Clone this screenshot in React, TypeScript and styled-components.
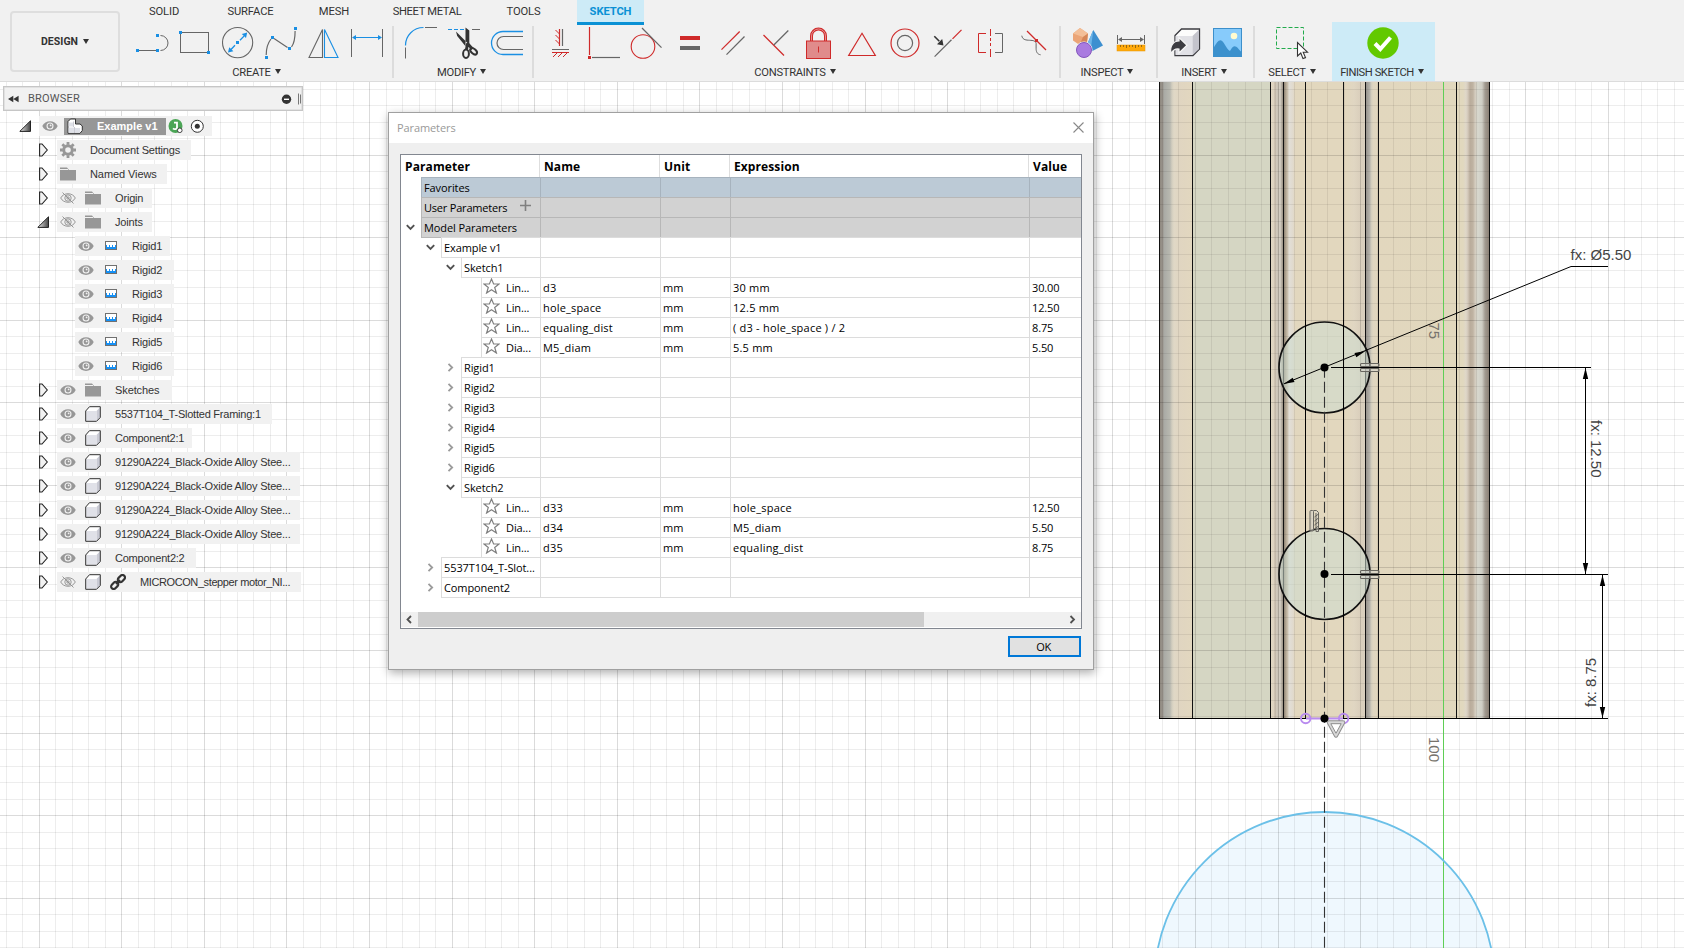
import React from "react";
import styled, { createGlobalStyle } from "styled-components";

const GlobalStyle = createGlobalStyle`
  html, body { margin: 0; padding: 0; background: #fff; overflow: hidden; }
  *, *::before, *::after { box-sizing: border-box; }
`;

const BLUE = "#1a8fe3";
const RED = "#cf2a2a";
const GRAY = "#666";

/* ---------- Shell ---------- */

const Page = styled.div`
  position: relative;
  width: 1684px;
  height: 948px;
  overflow: hidden;
  display: flex;
  flex-direction: column;
  background: #fff;
  font-family: "Liberation Sans", Arial, sans-serif;
  font-size: 11px;
  color: #333;
`;

const Canvas = styled.svg`
  position: absolute;
  left: 0;
  top: 0;
`;

/* ---------- Toolbar ---------- */

const Toolbar = styled.header`
  position: relative;
  height: 82px;
  flex: none;
  display: flex;
  background: #f1f1f1;
  border-bottom: 1px solid #dcdcdc;
  font-family: Roboto, "Liberation Sans", sans-serif;
  font-size: 11.2px;
  color: #333;
`;

const DesignButton = styled.button`
  width: 110px;
  height: 61px;
  margin: 11px 4px 0 10px;
  padding: 0;
  display: flex;
  align-items: center;
  justify-content: center;
  gap: 5px;
  border: 2px solid #dedede;
  border-radius: 4px;
  background: #f1f1f1;
  font: 700 10.5px Roboto, sans-serif;
  letter-spacing: 0.05px;
  color: #333;
`;

const Caret = styled.i`
  width: 0;
  height: 0;
  border: 3px solid transparent;
  border-top: 5px solid #333;
  border-bottom: 0;
`;

const ToolbarMain = styled.div`
  display: flex;
  flex-direction: column;
`;

const Tabs = styled.nav`
  display: flex;
  height: 22px;
`;

const Tab = styled.div<{ $w: number; $active?: boolean; $ls?: number }>`
  width: ${(p) => p.$w}px;
  height: ${(p) => (p.$active ? 25 : 22)}px;
  margin-left: ${(p) => (p.$active ? 13 : 0)}px;
  line-height: 23px;
  text-align: center;
  letter-spacing: ${(p) => p.$ls ?? -0.1}px;
  white-space: nowrap;
  flex: none;
  ${(p) =>
    p.$active &&
    `background:#cdebf7; color:#0a91d5; font-weight:700; border-bottom:3px solid #0a91d5; z-index:1;`}
`;

const Groups = styled.div`
  display: flex;
  height: 59px;
`;

const Group = styled.section<{ $w: number; $hot?: boolean }>`
  width: ${(p) => p.$w}px;
  flex: none;
  display: flex;
  flex-direction: column;
  background: ${(p) => (p.$hot ? "#cdebf7" : "transparent")};
`;

const Divider = styled.span`
  width: 2px;
  height: 52px;
  margin-top: 4px;
  flex: none;
  background: #dcdcdc;
`;

const IconRow = styled.div`
  display: flex;
  height: 40px;
`;

const GroupLabel = styled.div<{ $ls?: number }>`
  height: 19px;
  padding: 1px 3px 0 0;
  display: flex;
  align-items: center;
  justify-content: center;
  gap: 4px;
  letter-spacing: ${(p) => p.$ls ?? -0.3}px;
  white-space: nowrap;
  i { margin-top: -2px; }
`;

const ToolSvg = styled.svg`
  display: block;
  flex: none;
  overflow: visible;
  fill: none;
`;

/* A tool slot spans from x to x2 on the toolbar; its art uses toolbar coordinates. */
function Tool({ x, x2, children }: { x: number; x2: number; children: React.ReactNode }) {
  return (
    <ToolSvg width={x2 - x} height={40} viewBox={`${x} 22 ${x2 - x} 40`}>
      {children}
    </ToolSvg>
  );
}

function Sq({ x, y, c = BLUE }: { x: number; y: number; c?: string }) {
  return <rect x={Math.round(x - 1.5)} y={Math.round(y - 1.5)} width="3" height="3" fill={c} />;
}

function CreateTools() {
  return (
    <IconRow>
      <Tool x={124} x2={174}>
        <path d="M139 50.5H156M160.5 35.5a7.5 7.5 0 0 1 0 15" stroke={GRAY} />
        <Sq x={137.7} y={50.3} /><Sq x={157.4} y={50.3} /><Sq x={157.4} y={35.3} />
      </Tool>
      <Tool x={174} x2={216}>
        <rect x="180.5" y="32.5" width="28" height="20" stroke={GRAY} />
        <Sq x={180.4} y={32.3} /><Sq x={208.6} y={52.3} />
      </Tool>
      <Tool x={216} x2={260}>
        <circle cx="237.6" cy="42.6" r="15.1" stroke={GRAY} strokeWidth="1.1" />
        <path d="M231 49.5l4-4.2M240 40.3l4-4.2" stroke={BLUE} strokeWidth="1.3" />
        <path d="M228 52.6l1.2-5.4 4.2 4zM247.2 32.6l-1.2 5.4-4.2-4z" fill={BLUE} />
        <Sq x={237.6} y={42.6} />
      </Tool>
      <Tool x={260} x2={302}>
        <path d="M266.2 55c0-7 2-12.500 4.800-16M274 38.500L287.500 47.500M291.500 47c3-4 3.600-9 3.600-16" stroke={GRAY} strokeWidth="1.2" />
        <Sq x={266.2} y={57.3} /><Sq x={272.4} y={37.3} /><Sq x={289.3} y={48.3} /><Sq x={295.1} y={28.7} />
      </Tool>
      <Tool x={302} x2={345}>
        <path d="M309 57.500L322.500 29.500V57.500Z" stroke={GRAY} strokeWidth="1.1" />
        <path d="M324.500 29.500L338 57.500H324.500Z" stroke={BLUE} strokeWidth="1.1" />
      </Tool>
      <Tool x={345} x2={393}>
        <path d="M351.500 29V57M382.500 29V57" stroke={GRAY} />
        <path d="M354 37.500H380" stroke={BLUE} />
        <path d="M352 37.500l4-2.500v5zM382 37.500l-4-2.500v5z" fill={BLUE} />
      </Tool>
    </IconRow>
  );
}

function ModifyTools() {
  return (
    <IconRow>
      <Tool x={394} x2={443}>
        <path d="M405.500 45.500A18 18 0 0 1 423.500 27.500" stroke={BLUE} strokeWidth="1.2" />
        <path d="M405.500 47.500V58.500M425 27.500H437" stroke={GRAY} />
      </Tool>
      <Tool x={443} x2={485}>
        <path d="M448 29.500H464" stroke={BLUE} strokeDasharray="4 2" />
        <path d="M472 29.500H480" stroke={GRAY} />
        <path d="M465.500 27.500l3.800 3v14l-3.800 2zM456 31.500l1.200 4.500 8.500 10.500 3.800-1.500z" fill="#333" />
        <path d="M467 43l5.500 6M467.500 43.500l-1 6" stroke="#333" strokeWidth="3" />
        <ellipse cx="466" cy="53.700" rx="2.900" ry="4.200" stroke="#333" strokeWidth="2" />
        <ellipse cx="473.600" cy="51.300" rx="2.300" ry="4" transform="rotate(-48 473.600 51.300)" stroke="#333" strokeWidth="2" />
      </Tool>
      <Tool x={485} x2={532}>
        <path d="M523 31.500H503a11.500 11.500 0 0 0 0 23H523" stroke={BLUE} strokeWidth="1.300" />
        <path d="M523 36.500H503.500a6.500 6.500 0 0 0 0 13H523" stroke={GRAY} strokeWidth="1.200" />
      </Tool>
    </IconRow>
  );
}

function ConstraintTools() {
  return (
    <IconRow>
      <Tool x={534} x2={580}>
        <path d="M559.500 29V46M552 52.500H569" stroke={RED} strokeWidth="1.200" />
        <path d="M562.500 29V46M552 49.500H569" stroke={GRAY} strokeWidth="1.200" />
        <path d="M555.500 30l4 4M555.500 35l4 4M555.500 40l4 4M557 53l-4 4M562 53l-4 4M567 53l-4 4" stroke={RED} />
      </Tool>
      <Tool x={580} x2={625}>
        <path d="M589.500 27V55" stroke={RED} strokeWidth="1.200" />
        <path d="M592 57.500H620" stroke={GRAY} strokeWidth="1.200" />
        <Sq x={589.5} y={57.5} c={RED} />
      </Tool>
      <Tool x={625} x2={670}>
        <circle cx="643" cy="46.500" r="11.800" stroke={RED} strokeWidth="1.100" />
        <path d="M642 28L661.500 47.700" stroke={GRAY} strokeWidth="1.200" />
      </Tool>
      <Tool x={670} x2={711}>
        <rect x="680" y="36" width="20" height="4" fill={RED} />
        <rect x="680" y="46" width="20" height="4" fill={GRAY} />
      </Tool>
      <Tool x={711} x2={755}>
        <path d="M721.500 49.700L739.700 31.500" stroke={RED} strokeWidth="1.200" />
        <path d="M726.500 54.700L744.500 36.500" stroke={GRAY} strokeWidth="1.200" />
      </Tool>
      <Tool x={755} x2={797}>
        <path d="M763.500 35L784 55.500" stroke={RED} strokeWidth="1.200" />
        <path d="M773.800 45L788.300 30.500" stroke={GRAY} strokeWidth="1.200" />
      </Tool>
      <Tool x={797} x2={840}>
        <path d="M811.500 41v-5a7 7 0 0 1 14 0v5" stroke={RED} strokeWidth="3" />
        <path d="M811.500 41v-5a7 7 0 0 1 14 0v5" stroke="#e58f8f" strokeWidth="1" />
        <rect x="806.500" y="41" width="24" height="17.500" fill="#e08b8b" stroke={RED} />
        <path d="M818.500 46.500V52.500" stroke={RED} />
      </Tool>
      <Tool x={840} x2={883}>
        <path d="M862 33.300L875.300 55.500H848.700Z" stroke={RED} strokeWidth="1.200" />
      </Tool>
      <Tool x={883} x2={926}>
        <circle cx="905" cy="43" r="14" stroke={RED} strokeWidth="1.200" />
        <circle cx="905" cy="43" r="7.600" stroke={GRAY} strokeWidth="1.200" />
      </Tool>
      <Tool x={926} x2={969}>
        <path d="M961.500 29.800L952.500 38.800" stroke={RED} strokeWidth="1.200" />
        <path d="M951.500 39.800L934.600 56.600" stroke={GRAY} strokeWidth="1.200" />
        <path d="M934.300 36.300l5 5" stroke="#333" strokeWidth="1.600" />
        <path d="M943.500 45.500l-6.500-1.300 5.200-5.200z" fill="#333" />
      </Tool>
      <Tool x={969} x2={1012}>
        <path d="M986 33.500H978.500V52.500H986" stroke={RED} />
        <path d="M990.500 29v7M990.500 38v3M990.500 43v3M990.500 49v8" stroke={RED} />
        <path d="M995 33.500H1002.500V52.500H995" stroke={GRAY} />
      </Tool>
      <Tool x={1012} x2={1059}>
        <path d="M1021.800 35.700c.6 3.500 3 4.300 6.500 4.500s7 0 7.800 3v5c0 3.500 1 6 4.500 6.600" stroke={GRAY} />
        <path d="M1027 31L1046 50" stroke={RED} strokeWidth="1.200" />
        <Sq x={1036.400} y={40.500} c={RED} />
      </Tool>
    </IconRow>
  );
}

function InspectTools() {
  return (
    <IconRow>
      <Tool x={1061} x2={1110}>
        <path d="M1080 28l8 5.500-1 8.500-7.500 3-6.500-4.500v-7z" fill="#eba577" />
        <path d="M1080 28l8 5.500-5 3.500-10-3.500z" fill="#f3bf98" />
        <path d="M1088 33.500l-1 8.500-7.500 3 3.500-8z" fill="#d58658" />
        <path d="M1093.300 30l9.700 15.500-12.500 6.500-4.500-5z" fill="#3d8fd0" />
        <path d="M1093.300 30l-2.800 22-4.500-5z" fill="#6db5e8" />
        <circle cx="1084" cy="50" r="8.500" fill="#f1f1f1" />
        <circle cx="1084" cy="50" r="7.500" fill="#a97be0" stroke="#8456bd" />
      </Tool>
      <Tool x={1110} x2={1156}>
        <path d="M1117.500 35V44M1144.500 35V44M1119 39.500H1143" stroke={GRAY} />
        <path d="M1118 39.500l4-2.500v5zM1144 39.500l-4-2.500v5z" fill={GRAY} />
        <rect x="1117" y="45" width="28" height="6" fill="#ffa90a" stroke="#e59400" strokeWidth=".5" />
        <path d="M1120.500 45v2M1123.500 45v2M1126.500 45v3M1129.500 45v2M1132.500 45v2M1135.500 45v3M1138.500 45v2M1141.500 45v2" stroke="#9a6a10" />
      </Tool>
    </IconRow>
  );
}

function InsertTools() {
  return (
    <IconRow>
      <Tool x={1158} x2={1207}>
        <path d="M1175 35.500l6.500-6.500H1199.500V49l-6.500 6.500H1175z" fill="#fcfcfc" stroke="#3b3b40" strokeWidth="1.300" />
        <path d="M1175.600 36H1192.500V55H1175.600z" fill="#e1e1e6" />
        <path d="M1192.500 36l6.500-6.300V49l-6.500 6z" fill="#c4c4cc" />
        <path d="M1171 53.500c-1.500-7 2-12.500 8-12.500v-3.500l8 7.700-8 7.800v-4c-3.500-.5-6 1-8 4.500z" fill="#3c3c41" stroke="#f5f5f5" strokeWidth="1.200" />
      </Tool>
      <Tool x={1207} x2={1253}>
        <rect x="1213.500" y="28.500" width="28" height="28" fill="#87cbfb" stroke="#3c8fcb" />
        <path d="M1213.500 48c3-5 4.500-7.800 7-7.800 3.500 0 5.500 9 9.500 10.800 1.500-2 2.500-4.700 4.500-4.700 2.500 0 4 3 7 5.700v4.500h-28z" fill="#3c91cd" />
        <circle cx="1234" cy="36" r="3.300" fill="#fffbcf" />
      </Tool>
    </IconRow>
  );
}

function SelectTools() {
  return (
    <IconRow>
      <Tool x={1255} x2={1332}>
        <path d="M1276.500 27.500H1303.500V48.500H1276.500z" stroke="#22ab4c" strokeDasharray="4 2" />
        <path d="M1297.500 42.500V56l3.300-3 2.200 5.600 2.500-1-2.300-5.400h4.300z" fill="#fff" stroke="#333" strokeWidth="1.100" />
      </Tool>
    </IconRow>
  );
}

function FinishTools() {
  return (
    <IconRow>
      <Tool x={1332} x2={1435}>
        <circle cx="1383" cy="43" r="15.700" fill="#62c900" />
        <path d="M1375 43.500l5.300 5.500 10.200-11.500" stroke="#fff" strokeWidth="4" />
      </Tool>
    </IconRow>
  );
}

function Label({ children, ls }: { children: string; ls?: number }) {
  return (
    <GroupLabel $ls={ls}>
      {children}
      <Caret />
    </GroupLabel>
  );
}

function TopBar() {
  return (
    <Toolbar>
      <DesignButton>DESIGN <Caret /></DesignButton>
      <ToolbarMain>
        <Tabs>
          <Tab $w={80}>SOLID</Tab>
          <Tab $w={93}>SURFACE</Tab>
          <Tab $w={74}>MESH</Tab>
          <Tab $w={112} $ls={-0.35}>SHEET METAL</Tab>
          <Tab $w={81}>TOOLS</Tab>
          <Tab $w={67} $active>SKETCH</Tab>
        </Tabs>
        <Groups>
          <Group $w={268}><CreateTools /><Label>CREATE</Label></Group>
          <Divider />
          <Group $w={138}><ModifyTools /><Label>MODIFY</Label></Group>
          <Divider />
          <Group $w={525}><ConstraintTools /><Label>CONSTRAINTS</Label></Group>
          <Divider />
          <Group $w={95}><InspectTools /><Label>INSPECT</Label></Group>
          <Divider />
          <Group $w={95}><InsertTools /><Label>INSERT</Label></Group>
          <Divider />
          <Group $w={77}><SelectTools /><Label>SELECT</Label></Group>
          <Group $w={103} $hot><FinishTools /><Label ls={-0.45}>FINISH SKETCH</Label></Group>
        </Groups>
      </ToolbarMain>
    </Toolbar>
  );
}

/* ---------- Sketch canvas ---------- */

const range = (a: number, b: number) => Array.from({ length: b - a + 1 }, (_, i) => a + i);
const GRID_X = range(-2, 100).map((k) => ({ p: Math.floor(39.2 + 16.518 * k), major: k % 5 === 0 }));
const GRID_Y = range(-4, 48).map((k) => ({ p: Math.floor(155.1 + 16.514 * k), major: k % 5 === 0 }));
const EDGES = [1159, 1192, 1270, 1283, 1305, 1343, 1365, 1378, 1456, 1489];

const STOPS: [number, string][] = [
  [1159, "#8b847b"], [1163, "#9b968e"], [1164, "#a9aaa5"], [1170, "#b8b8b0"], [1172, "#d3cebf"],
  [1174, "#e0d8c6"], [1180, "#e0d5c1"], [1192, "#e2d7bf"], [1192, "#d5d6c3"], [1270, "#d5d6c3"],
  [1270, "#e2d8c2"], [1274, "#ded3c0"], [1275, "#bdb1a1"], [1277, "#d6cfc2"], [1278, "#c1b9ac"],
  [1280, "#d9d3c8"], [1282, "#aaa398"], [1284, "#8f8374"], [1286, "#b5a996"], [1288, "#cfc5b4"],
  [1289, "#e2dfd8"], [1293, "#e1dacd"], [1295, "#e2d7be"], [1346, "#e2d7be"], [1354, "#e0d6c2"],
  [1360, "#dacfbc"], [1365, "#d8cebd"], [1366, "#96928c"], [1370, "#b7b4ac"], [1371, "#d0cbbc"],
  [1373, "#dfd6c1"], [1378, "#e2d7be"], [1463, "#e1d8be"], [1466, "#dfd7c9"], [1468, "#d2c7b8"],
  [1470, "#b9ac9b"], [1473, "#bfb3a2"], [1475, "#d3cbbd"], [1478, "#d7d8ce"], [1482, "#cfcdc4"],
  [1485, "#a39b91"], [1489, "#8b8075"],
];

const DimText = styled.text`
  font-family: "Liberation Sans", Arial, sans-serif;
  font-size: 15px;
  fill: #444;
`;
const AxisText = styled(DimText)`
  fill: #77736c;
  font-size: 15px;
`;

function SketchCanvas() {
  return (
    <Canvas width="1684" height="948" viewBox="0 0 1684 948" fill="none">
      <defs>
        <linearGradient id="extrusion" gradientUnits="userSpaceOnUse" x1="1159" x2="1490" y1="0" y2="0">
          {STOPS.map(([x, c], i) => (
            <stop key={i} offset={(x - 1159) / 331} stopColor={c} />
          ))}
        </linearGradient>
      </defs>
      <circle cx="1324.500" cy="982" r="170" fill="#eff8fe" />
      <rect x="1159" y="80" width="331" height="638" fill="url(#extrusion)" />
      <g shapeRendering="crispEdges">
        {GRID_X.map((g) => (
          <rect key={g.p} x={g.p} y="82" width="1" height="866" fill="#000" fillOpacity={g.major ? 0.14 : 0.07} />
        ))}
        {GRID_Y.map((g) => (
          <rect key={g.p} x="0" y={g.p} width="1684" height="1" fill="#000" fillOpacity={g.major ? 0.14 : 0.07} />
        ))}
        <rect x="1443" y="82" width="1" height="866" fill="#5fce55" />
        {EDGES.map((x) => (
          <rect key={x} x={x} y="82" width="1" height="637" fill="#111" />
        ))}
      </g>
      {[367.5, 574].map((cy) => (
        <circle key={cy} cx="1324.500" cy={cy} r="45.500" fill="#cdddd0" fillOpacity=".55" stroke="#111" strokeWidth="1.700" />
      ))}
      <circle cx="1324.500" cy="982" r="170" stroke="#6bc0e8" strokeWidth="1.800" />
      <g shapeRendering="crispEdges" fill="#000">
        {[1305, 1343].map((x) => (
          <rect key={x} x={x} y="320" width="1" height="300" />
        ))}
        <rect x="1331" y="367" width="260" height="1" />
        <rect x="1331" y="574" width="277" height="1" />
        <rect x="1159" y="718" width="449" height="1" />
        <rect x="1585" y="367" width="1" height="207" />
        <rect x="1602" y="574" width="1" height="144" />
        <rect x="1571" y="266" width="37" height="1" />
      </g>
      <path d="M1324.500 366.700V948" stroke="#333" strokeWidth="1.100" strokeDasharray="11 4" />
      <path d="M1284 383.800L1571 266.500" stroke="#000" />
      <g fill="#000">
        <path d="M1365.500 351l-9.200 6.300-1.800-4.400zM1283.500 384l9.200-6.300 1.800 4.400z" />
        <path d="M1585.500 368l2.700 11h-5.400zM1585.500 574l2.700-11h-5.400zM1602.500 575l2.700 11h-5.400zM1602.500 718l2.700-11h-5.400z" />
      </g>
      {[367.5, 574.5].map((y) => (
        <g key={y} stroke="#67655f" fill="#d9d8cf" fillOpacity=".5" strokeWidth="1.100">
          <rect x="1360.500" y={y - 4} width="18.500" height="3" rx="1" />
          <rect x="1360.500" y={y + 1} width="18.500" height="3" rx="1" />
        </g>
      ))}
      <g stroke="#67655f" strokeWidth="1" fill="#d9d8cf" fillOpacity=".5">
        <rect x="1310" y="510.500" width="3.500" height="20.500" rx="1" />
        <path d="M1313.500 510.500h3l2 2v19h-2.500v-18.500M1314.500 517l4-3M1314.500 521l4-3M1314.500 525l4-3M1314.500 529l4-3" />
      </g>
      <path d="M1306 718.500H1343" stroke="#b98bef" strokeWidth="2" />
      <circle cx="1305.700" cy="718.500" r="4.700" stroke="#b98bef" strokeWidth="1.900" />
      <circle cx="1343.600" cy="718.500" r="4.700" stroke="#b98bef" strokeWidth="1.900" />
      {[367.5, 574, 718.5].map((y) => (
        <circle key={y} cx="1324.500" cy={y} r="4" fill="#000" />
      ))}
      <path d="M1329 722.500H1343L1336 735.500z" stroke="#8f8f8f" strokeWidth="4.400" strokeLinejoin="round" />
      <path d="M1329 722.500H1343L1336 735.500z" stroke="#d8d8d8" strokeWidth="2.400" strokeLinejoin="round" />
      <path d="M1330.800 723.700H1341.200L1336 733.300z" stroke="#8f8f8f" fill="#fff" />
      <DimText x="1570.500" y="260">fx: Ø5.50</DimText>
      <DimText transform="translate(1591.300 420) rotate(90)">fx: 12.50</DimText>
      <DimText transform="translate(1596 707) rotate(-90)">fx: 8.75</DimText>
      <AxisText transform="translate(1429 322.500) rotate(90)">75</AxisText>
      <AxisText transform="translate(1429 737) rotate(90)">100</AxisText>
    </Canvas>
  );
}

/* ---------- Browser tree ---------- */

const Browser = styled.aside`
  position: relative;
  width: 304px;
  padding-top: 4px;
`;

const BrowserHeader = styled.div`
  width: 300px;
  height: 25px;
  margin-left: 3px;
  padding: 0 0 0 4px;
  display: flex;
  align-items: center;
  border: 1px solid #c6c6c6;
  box-shadow: inset 0 0 0 0.5px #d2d2d2;
  background: #f1f1f1;
  font-family: Roboto, sans-serif;
  font-size: 11px;
  letter-spacing: 0.2px;
  color: #555;
  svg { flex: none; }
`;

const BrowserTitle = styled.span`
  flex: 1;
  margin-left: 9px;
`;

const Tree = styled.div`
  display: flex;
  flex-direction: column;
  gap: 4px;
  padding-top: 5px;
`;

const TreeRow = styled.div`
  display: flex;
  height: 20px;
`;

const Toggle = styled.span<{ $w: number; $pad: number }>`
  width: ${(p) => p.$w}px;
  padding-right: ${(p) => p.$pad}px;
  display: flex;
  align-items: center;
  justify-content: flex-end;
  flex: none;
`;

const Chip = styled.div<{ $w: number }>`
  width: ${(p) => p.$w}px;
  height: 20px;
  padding-left: 3px;
  display: flex;
  align-items: center;
  gap: 9px;
  background: #f1f1f1;
  white-space: nowrap;
  svg { flex: none; display: block; }
`;

const ChipText = styled.span<{ $ls?: number; $deep?: boolean }>`
  margin-left: ${(p) => (p.$deep ? 4 : 5)}px;
  letter-spacing: ${(p) => p.$ls ?? -0.17}px;
`;

const RootName = styled.div`
  width: 102px;
  height: 17px;
  margin-left: -3px;
  padding-left: 3px;
  display: flex;
  align-items: center;
  gap: 14px;
  background: #979797;
  color: #fff;
  font-weight: 700;
  letter-spacing: 0;
`;

const RootMarks = styled.div`
  margin-left: -7px;
  display: flex;
  gap: 7px;
`;

const icon16 = { width: 16, height: 16, viewBox: "0 0 16 16", fill: "none" };

const Eye = () => (
  <svg {...icon16}>
    <path d="M.3 8C3 1.500 13 1.500 15.700 8 13 14.500 3 14.500.3 8z" fill="#979797" />
    <circle cx="8" cy="8" r="3.500" fill="#f1f1f1" />
    <circle cx="8" cy="8" r="2.400" fill="#979797" />
    <circle cx="8.600" cy="7.400" r=".9" fill="#f1f1f1" />
  </svg>
);
const EyeOff = () => (
  <svg {...icon16} stroke="#8d8d8d" strokeWidth=".9">
    <path d="M.7 8C3.500 2.300 12.500 2.300 15.300 8 12.500 13.700 3.500 13.700.7 8z" />
    <circle cx="8" cy="8" r="3.200" />
    <circle cx="8" cy="8" r="1.200" />
    <path d="M2.500 2.500l11 11" />
  </svg>
);
const Folder = () => (
  <svg {...icon16}>
    <path d="M0 1.500h7l2 2.500h7v10.500H0z" fill="#979797" />
    <path d="M0 3.500h8" stroke="#f1f1f1" />
  </svg>
);
const Gear = () => (
  <svg {...icon16}>
    <circle cx="8" cy="8" r="4.300" stroke="#979797" strokeWidth="3" />
    {[0, 45, 90, 135].map((a) => (
      <path key={a} d="M8 0v2.800M8 13.200v2.800" stroke="#979797" strokeWidth="2.800" transform={`rotate(${a} 8 8)`} />
    ))}
  </svg>
);
const Joint = () => (
  <svg {...icon16} shapeRendering="crispEdges">
    <rect x="2.500" y="3.500" width="11" height="8" fill="#fff" stroke="#707070" />
    <path d="M3 7h1v2h2V7h1v2h2V7h1v2h2V7h1v4H3z" fill="#1590f5" />
  </svg>
);
const Cube = () => (
  <svg {...icon16}>
    <path d="M.700 5L4.500.700H15.300V11.500L11.500 15.300H.700z" fill="#fff" />
    <path d="M1.200 5h10v9.800h-10z" fill="#e0e1e8" />
    <path d="M11.500 5L15 1.300v10L11.500 15z" fill="#c9cad4" />
    <path d="M.700 5L4.500.700H15.300V11.500L11.500 15.300H.700z" stroke="#333" />
  </svg>
);
const Assembly = () => (
  <svg {...icon16}>
    <path d="M1 3.500L3.500 1H8.500V6h4.500L15.300 8v4.500L13 15.300H1z" fill="#fff" stroke="#333" />
    <path d="M1.600 9.500h5.800v5.200H1.600zM8 10h5v4.700H8zM1.600 4.500h4.400v4H1.600z" fill="#dfe1e8" />
    <path d="M7.500 9v6M6.500 3.500V9" stroke="#bcbec8" strokeWidth=".8" />
  </svg>
);
const Link = () => (
  <svg {...icon16} stroke="#333" strokeWidth="2.200">
    <rect x="-4" y="-2.500" width="8" height="5" rx="2.500" transform="translate(11.400 4.600) rotate(-45)" />
    <rect x="-4" y="-2.500" width="8" height="5" rx="2.500" transform="translate(4.700 11.400) rotate(-45)" />
    <path d="M6 10l4-4" />
  </svg>
);
const ArrowClosed = () => (
  <svg width="9" height="14" viewBox="0 0 9 14">
    <path d="M.600 1h2.400L8.300 7 3 13H.600z" fill="#f2f2f2" stroke="#222" strokeWidth="1.100" />
  </svg>
);
const ArrowOpen = () => (
  <svg width="12" height="12" viewBox="0 0 12 12">
    <defs>
      <linearGradient id="fold" x1="0" x2="1" y1="0" y2="0">
        <stop offset="0" stopColor="#eee" />
        <stop offset="1" stopColor="#444" />
      </linearGradient>
    </defs>
    <path d="M11.500.800V11.400H.800z" fill="url(#fold)" stroke="#222" />
  </svg>
);

const ICONS: Record<string, () => React.ReactElement> = {
  eye: Eye, off: EyeOff, folder: Folder, gear: Gear, joint: Joint, cube: Cube, link: Link,
};

type Node = { t: string; lvl: 1 | 2; w: number; icons: string[]; open?: boolean; ls?: number };
const screw: Node = { t: "91290A224_Black-Oxide Alloy Stee...", lvl: 1, w: 243, icons: ["eye", "cube"], ls: -0.21 };
const NODES: Node[] = [
  { t: "Document Settings", lvl: 1, w: 134, icons: ["gear"] },
  { t: "Named Views", lvl: 1, w: 110, icons: ["folder"], ls: -0.08 },
  { t: "Origin", lvl: 1, w: 95, icons: ["off", "folder"] },
  { t: "Joints", lvl: 1, w: 95, icons: ["off", "folder"], open: true },
  ...range(1, 6).map((n): Node => ({ t: `Rigid${n}`, lvl: 2, w: n === 1 ? 95 : 99, icons: ["eye", "joint"] })),
  { t: "Sketches", lvl: 1, w: 115, icons: ["eye", "folder"], ls: -0.1 },
  { t: "5537T104_T-Slotted Framing:1", lvl: 1, w: 215, icons: ["eye", "cube"], ls: -0.23 },
  { t: "Component2:1", lvl: 1, w: 135, icons: ["eye", "cube"], ls: -0.25 },
  screw, screw, screw, screw,
  { t: "Component2:2", lvl: 1, w: 139, icons: ["eye", "cube"], ls: -0.22 },
  { t: "MICROCON_stepper motor_NI...", lvl: 1, w: 244, icons: ["off", "cube", "link"], ls: -0.4 },
];

function BrowserPanel() {
  return (
    <Browser>
      <BrowserHeader>
        <svg width="11" height="8" viewBox="0 0 11 8"><path d="M5.300.800v6.400L0 4zM10.600.800v6.400L5.300 4z" fill="#333" /></svg>
        <BrowserTitle>BROWSER</BrowserTitle>
        <svg width="21" height="16" viewBox="0 0 21 16">
          <circle cx="5.500" cy="8.300" r="4.700" fill="#333" />
          <path d="M3 8.300h5" stroke="#fff" strokeWidth="1.400" />
          <path d="M17.500 2.500v11M19.500 3.500v9" stroke="#777" />
        </svg>
      </BrowserHeader>
      <Tree>
        <TreeRow>
          <Toggle $w={39} $pad={8}><ArrowOpen /></Toggle>
          <Chip $w={173}>
            <Eye />
            <RootName><Assembly />Example v1</RootName>
            <RootMarks>
              <svg width="15" height="16" viewBox="0 0 15 16">
                <circle cx="7.500" cy="8" r="7" fill="#4ba556" />
                <path d="M6 4.600h3v5.200c0 1.600-2.800 1.700-4 .6" stroke="#fff" strokeWidth="1.800" fill="none" />
                <circle cx="11.800" cy="12.300" r="2.300" fill="#fff" stroke="#333" strokeWidth=".9" />
              </svg>
              <svg width="15" height="16" viewBox="0 0 15 16">
                <circle cx="7.300" cy="8.300" r="6" fill="#fff" stroke="#333" />
                <circle cx="7.300" cy="8.300" r="2.500" fill="#333" />
              </svg>
            </RootMarks>
          </Chip>
        </TreeRow>
        {NODES.map((n, i) => (
          <TreeRow key={i}>
            <Toggle $w={n.lvl === 1 ? 57 : 75} $pad={n.open ? 8 : 9}>
              {n.lvl === 1 && (n.open ? <ArrowOpen /> : <ArrowClosed />)}
            </Toggle>
            <Chip $w={n.w}>
              {n.icons.map((k) => {
                const I = ICONS[k];
                return <I key={k} />;
              })}
              <ChipText $ls={n.ls} $deep={n.lvl === 2}>{n.t}</ChipText>
            </Chip>
          </TreeRow>
        ))}
      </Tree>
    </Browser>
  );
}

/* ---------- Parameters dialog ---------- */

const Dialog = styled.div`
  position: absolute;
  left: 388px;
  top: 112px;
  width: 706px;
  height: 558px;
  display: flex;
  flex-direction: column;
  border: 1px solid #a0a0a0;
  background: #efefef;
  box-shadow: 1px 3px 9px rgba(0, 0, 0, 0.32);
  font-family: "Open Sans", "Noto Sans", sans-serif;
  font-size: 11px;
  letter-spacing: -0.1px;
  color: #000;
`;

const TitleBar = styled.div`
  height: 30px;
  padding: 0 9px 2px 8px;
  display: flex;
  align-items: center;
  justify-content: space-between;
  background: #fff;
  color: #999;
`;

const Table = styled.div`
  width: 682px;
  height: 475px;
  margin: 11px 0 0 11px;
  display: flex;
  flex-direction: column;
  overflow: hidden;
  border: 1px solid #828790;
  background: #fff;
`;

const HeadRow = styled.div`
  display: flex;
  height: 23px;
  flex: none;
  font-weight: 700;
  font-size: 12px;
  letter-spacing: 0.1px;
`;

const HeadCell = styled.div<{ $w: number }>`
  width: ${(p) => p.$w}px;
  height: 22px;
  padding-left: 4px;
  line-height: 23px;
  & + & { border-left: 1px solid #dedede; }
`;

type Tone = "fav" | "group" | "plain";
const TONES: Record<Tone, [string, string]> = {
  fav: ["#bccad6", "#a7b3be"],
  group: ["#d2d2d2", "#b7b7b7"],
  plain: ["#fff", "#dcdcdc"],
};

const Row = styled.div`
  display: flex;
  height: 21px;
  margin-top: -1px;
  flex: none;
`;

const Gutter = styled.div<{ $w: number }>`
  width: ${(p) => p.$w}px;
  padding-right: 6px;
  display: flex;
  align-items: center;
  justify-content: flex-end;
  flex: none;
`;

const Cell = styled.div<{ $w: number; $tone: Tone; $ls?: number }>`
  width: ${(p) => p.$w}px;
  flex: none;
  padding-left: 2px;
  display: flex;
  align-items: center;
  white-space: pre;
  letter-spacing: ${(p) => p.$ls ?? -0.1}px;
  border: 1px solid ${(p) => TONES[p.$tone][1]};
  border-right: 0;
  background: ${(p) => TONES[p.$tone][0]};
`;

const Star = styled.svg`
  margin: -3px 6px 0 -1px;
`;

const Plus = styled.svg`
  margin: -4px 0 0 13px;
`;

const ScrollBar = styled.div`
  height: 15px;
  margin: auto 0 1px;
  display: flex;
  align-items: center;
  background: #f0f0f0;
  svg { flex: none; }
`;

const Thumb = styled.div`
  width: 506px;
  height: 15px;
  margin-right: auto;
  background: #cdcdcd;
`;

const OkButton = styled.button`
  width: 73px;
  height: 21px;
  margin: 7px 12px 0 auto;
  padding: 0 2px 0 0;
  border: 2px solid #0078d7;
  background: #e1e1e1;
  font: 11px "Open Sans", sans-serif;
  letter-spacing: -0.4px;
  color: #000;
`;

type Param = { lvl: number; t: string; tone?: Tone; st?: "open" | "closed"; v?: string[]; star?: boolean; plus?: boolean };
const PARAMS: Param[] = [
  { lvl: 0, t: "Favorites", tone: "fav" },
  { lvl: 0, t: "User Parameters", tone: "group", plus: true },
  { lvl: 0, t: "Model Parameters", tone: "group", st: "open" },
  { lvl: 1, t: "Example v1", st: "open" },
  { lvl: 2, t: "Sketch1", st: "open" },
  { lvl: 3, t: "Lin...", star: true, v: ["d3", "mm", "30 mm", "30.00"] },
  { lvl: 3, t: "Lin...", star: true, v: ["hole_space", "mm", "12.5 mm", "12.50"] },
  { lvl: 3, t: "Lin...", star: true, v: ["equaling_dist", "mm", "( d3 - hole_space ) / 2", "8.75"] },
  { lvl: 3, t: "Dia...", star: true, v: ["M5_diam", "mm", "5.5 mm", "5.50"] },
  ...range(1, 6).map((n): Param => ({ lvl: 2, t: `Rigid${n}`, st: "closed" })),
  { lvl: 2, t: "Sketch2", st: "open" },
  { lvl: 3, t: "Lin...", star: true, v: ["d33", "mm", "hole_space", "12.50"] },
  { lvl: 3, t: "Dia...", star: true, v: ["d34", "mm", "M5_diam", "5.50"] },
  { lvl: 3, t: "Lin...", star: true, v: ["d35", "mm", "equaling_dist", "8.75"] },
  { lvl: 1, t: "5537T104_T-Slot...", st: "closed" },
  { lvl: 1, t: "Component2", st: "closed" },
];
const COLS = [
  { w: 120, ls: 0.18 },
  { w: 70, ls: 0.1 },
  { w: 299, ls: 0.22 },
  { w: 52, ls: -0.15 },
];

function ParametersDialog() {
  return (
    <Dialog>
      <TitleBar>
        Parameters
        <svg width="11" height="11" viewBox="0 0 11 11"><path d="M.500.500l10 10M10.500.500l-10 10" stroke="#888" strokeWidth="1.100" /></svg>
      </TitleBar>
      <Table>
        <HeadRow>
          <HeadCell $w={138}>Parameter</HeadCell>
          <HeadCell $w={120}>Name</HeadCell>
          <HeadCell $w={70}>Unit</HeadCell>
          <HeadCell $w={299}>Expression</HeadCell>
          <HeadCell $w={53}>Value</HeadCell>
        </HeadRow>
        {PARAMS.map((p, i) => {
          const tone = p.tone ?? "plain";
          const indent = 20 + p.lvl * 20;
          return (
            <Row key={i}>
              <Gutter $w={indent}>
                {p.st === "open" && (
                  <svg width="9" height="7" viewBox="0 0 9 7"><path d="M.800 1.200l3.700 3.700 3.700-3.700" stroke="#505050" strokeWidth="1.900" fill="none" /></svg>
                )}
                {p.st === "closed" && (
                  <svg width="8" height="9" viewBox="0 0 8 9"><path d="M1.500.800l3.700 3.700-3.700 3.700" stroke="#9b9b9b" strokeWidth="1.800" fill="none" /></svg>
                )}
              </Gutter>
              <Cell $w={139 - indent} $tone={tone} $ls={p.plus ? -0.2 : -0.1}>
                {p.star && (
                  <Star width="17" height="16" viewBox="0 0 17 16">
                    <path d="M8.500 1l2.100 5h5.400l-4.300 3.500 1.700 5.500-4.900-3.200L3.600 15l1.700-5.500L1 6h5.400z" fill="#fff" stroke="#808080" strokeWidth="1.200" />
                  </Star>
                )}
                {p.t}
                {p.plus && (
                  <Plus width="11" height="11" viewBox="0 0 11 11"><path d="M5.500 0v11M0 5.500h11" stroke="#808080" strokeWidth="1.600" /></Plus>
                )}
              </Cell>
              {COLS.map((col, c) => (
                <Cell key={c} $w={col.w} $ls={col.ls} $tone={tone}>{p.v?.[c]}</Cell>
              ))}
            </Row>
          );
        })}
        <ScrollBar>
          <svg width="17" height="15" viewBox="0 0 17 15"><path d="M10 4L6.500 7.500l3.500 3.500" stroke="#505050" strokeWidth="1.800" fill="none" /></svg>
          <Thumb />
          <svg width="17" height="15" viewBox="0 0 17 15"><path d="M6.500 4L10 7.500 6.500 11" stroke="#505050" strokeWidth="1.800" fill="none" /></svg>
        </ScrollBar>
      </Table>
      <OkButton>OK</OkButton>
    </Dialog>
  );
}

export default function App() {
  return (
    <>
      <GlobalStyle />
      <Page>
        <SketchCanvas />
        <TopBar />
        <BrowserPanel />
        <ParametersDialog />
      </Page>
    </>
  );
}
